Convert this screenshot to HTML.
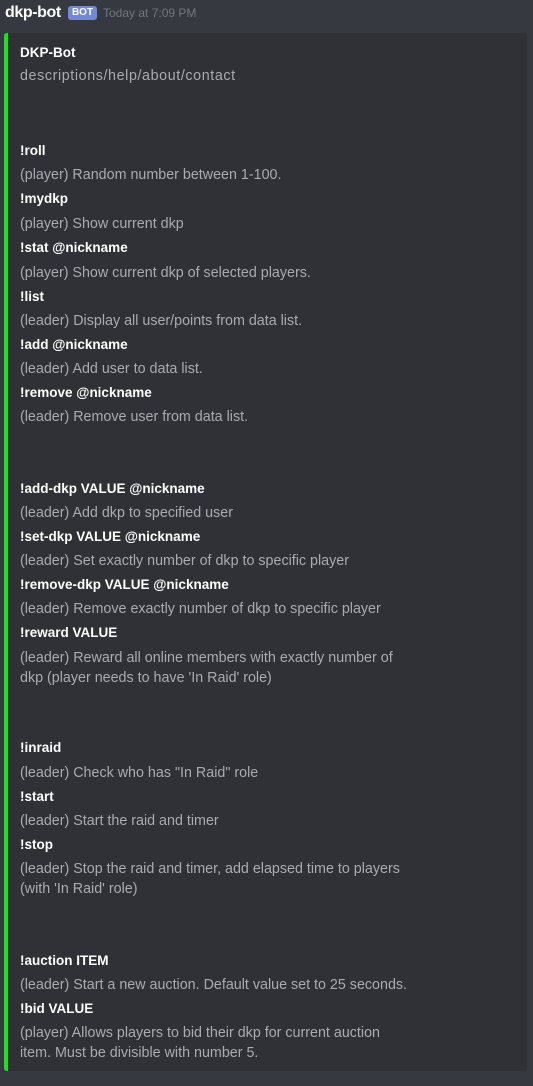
<!DOCTYPE html>
<html><head><meta charset="utf-8"><style>
body{margin:0;width:533px;height:1086px;background:#36393f;font-family:"Liberation Sans",sans-serif;position:relative;overflow:hidden}
.h{position:absolute;left:5px;top:2px;color:#fff;font-size:16px;font-weight:bold;line-height:22px;letter-spacing:-0.4px}
.bot{position:absolute;left:68px;top:6px;width:29px;height:14px;background:#7289da;border-radius:3px;color:#fff;font-size:10px;font-weight:bold;text-align:center;line-height:14px}
.ts{position:absolute;left:103px;top:5px;color:#72767d;font-size:12px;line-height:16px}
.emb{position:absolute;left:4px;top:33px;width:523px;height:1038px;background:#2f3136;border-left:4px solid #19e619;border-radius:3px;box-sizing:border-box}
.l{position:absolute;left:20px;font-size:14.3px;line-height:24px;white-space:nowrap;color:#a9abaf}
.b{color:#fff;font-weight:bold;font-size:13.5px}
</style></head><body>
<div class="h">dkp-bot</div><div class="bot">BOT</div><div class="ts">Today at 7:09 PM</div>
<div class="emb"></div>
<div class="l b" style="top:41px">DKP-Bot</div>
<div class="l" style="top:64px;letter-spacing:0.6px">descriptions/help/about/contact</div>
<div class="l b" style="top:139px">!roll</div>
<div class="l" style="top:163px">(player) Random number between 1-100.</div>
<div class="l b" style="top:187px">!mydkp</div>
<div class="l" style="top:212px">(player) Show current dkp</div>
<div class="l b" style="top:236px">!stat @nickname</div>
<div class="l" style="top:261px">(player) Show current dkp of selected players.</div>
<div class="l b" style="top:285px">!list</div>
<div class="l" style="top:309px">(leader) Display all user/points from data list.</div>
<div class="l b" style="top:333px">!add @nickname</div>
<div class="l" style="top:357px">(leader) Add user to data list.</div>
<div class="l b" style="top:381px">!remove @nickname</div>
<div class="l" style="top:405px">(leader) Remove user from data list.</div>
<div class="l b" style="top:477px">!add-dkp VALUE @nickname</div>
<div class="l" style="top:501px">(leader) Add dkp to specified user</div>
<div class="l b" style="top:525px">!set-dkp VALUE @nickname</div>
<div class="l" style="top:549px">(leader) Set exactly number of dkp to specific player</div>
<div class="l b" style="top:573px">!remove-dkp VALUE @nickname</div>
<div class="l" style="top:597px">(leader) Remove exactly number of dkp to specific player</div>
<div class="l b" style="top:621px">!reward VALUE</div>
<div class="l" style="top:646px">(leader) Reward all online members with exactly number of</div>
<div class="l" style="top:666px">dkp (player needs to have 'In Raid' role)</div>
<div class="l b" style="top:736px">!inraid</div>
<div class="l" style="top:761px">(leader) Check who has "In Raid" role</div>
<div class="l b" style="top:785px">!start</div>
<div class="l" style="top:809px">(leader) Start the raid and timer</div>
<div class="l b" style="top:833px">!stop</div>
<div class="l" style="top:857px">(leader) Stop the raid and timer, add elapsed time to players</div>
<div class="l" style="top:877px">(with 'In Raid' role)</div>
<div class="l b" style="top:949px">!auction ITEM</div>
<div class="l" style="top:973px">(leader) Start a new auction. Default value set to 25 seconds.</div>
<div class="l b" style="top:997px">!bid VALUE</div>
<div class="l" style="top:1021px">(player) Allows players to bid their dkp for current auction</div>
<div class="l" style="top:1041px">item. Must be divisible with number 5.</div>
</body></html>
